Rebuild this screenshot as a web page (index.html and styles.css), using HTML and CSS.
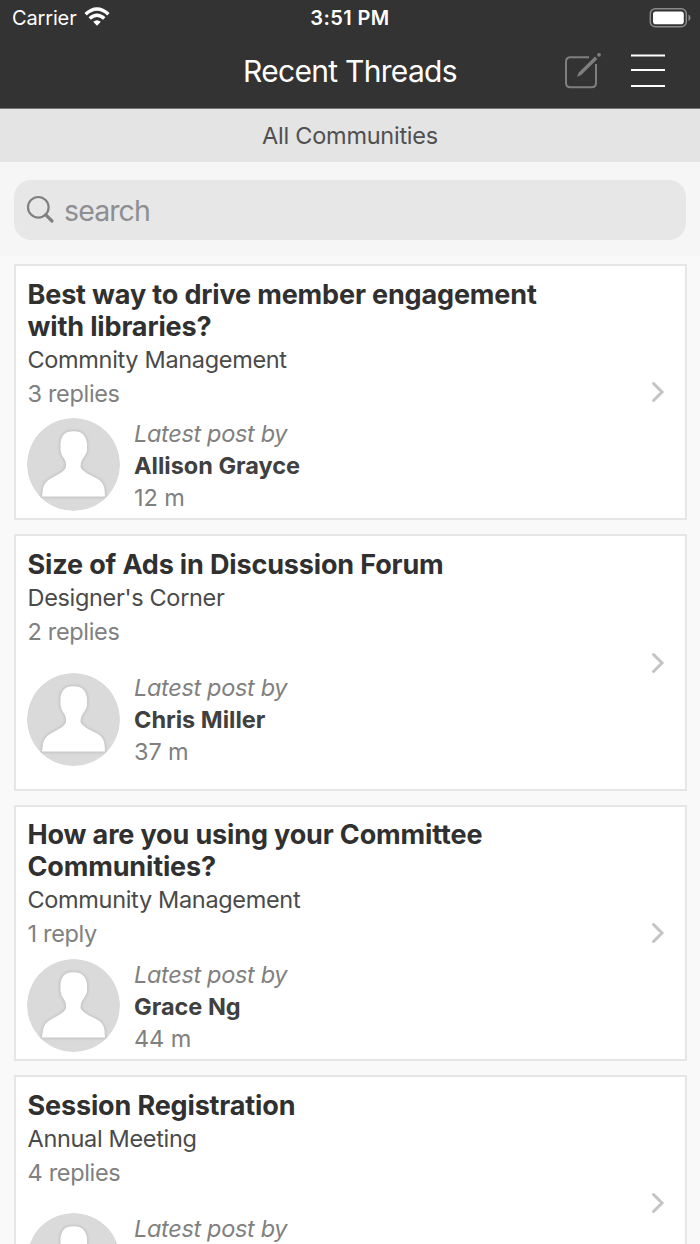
FILE: index.html
```html
<!DOCTYPE html>
<html lang="en">
<head>
<meta charset="utf-8">
<title>Recent Threads</title>
<link rel="stylesheet" href="styles.css">
</head>
<body>
<svg class="defs" aria-hidden="true">
  <defs>
    <filter id="soft" x="-10%" y="-10%" width="120%" height="120%"><feGaussianBlur stdDeviation="0.9"/></filter>
    <clipPath id="round"><circle cx="46.5" cy="46.5" r="46.5"/></clipPath>
    <path id="person" d="M40.500 14Q46.500 12.500 52.500 14Q59 17 60 25L60 33Q59 36 57 39Q53.500 43 53.500 49Q54.500 52 61 56L70 60.500Q76 63.500 77.500 71L78 78.500H15L16 71Q17 64.500 23 61L32 56Q38 52.500 39 49Q39.500 43 36 39Q34 36 33.500 32L33.500 25Q34 17 40.500 14Z"/>
    <symbol id="avatar" viewBox="0 0 93 93">
      <g clip-path="url(#round)">
        <circle cx="46.5" cy="46.5" r="46.5" fill="#dadada"/>
        <use href="#person" filter="url(#soft)" fill="none" stroke="#c6c6c6" stroke-width="3"/>
        <use href="#person" fill="#fff"/>
      </g>
    </symbol>
    <symbol id="chevron" viewBox="0 0 14 22"><path d="M2.500 2.500 11 11 2.500 19.500" fill="none" stroke="#c3c4c6" stroke-width="3" stroke-linecap="round" stroke-linejoin="miter"/></symbol>
  </defs>
</svg>
<header class="top">
  <div class="status">
    <div class="carrier"><span class="carrier-name">Carrier</span>
      <svg class="wifi" viewBox="0 0 26 20" fill="none" stroke="#fff" stroke-width="3.500">
        <path d="M1.600 7.200Q13-3.200 24.400 7.200"/><path d="M5.700 11.500Q13 5 20.300 11.500"/><path fill="#fff" stroke="none" d="M9.200 14.800Q13 11.600 16.800 14.800L13 18.800Z"/>
      </svg>
    </div>
    <span class="clock">3:51 PM</span>
    <svg class="battery" viewBox="0 0 42 20"><rect x="1.300" y=".8" width="36" height="18" rx="5" fill="none" stroke="#8b8b8b" stroke-width="1.500"/><rect x="4" y="3.400" width="30.800" height="12.800" rx="2.800" fill="#fff"/><path d="M39.500 6.500Q41.500 7.500 41.500 9.800T39.500 13Z" fill="#8b8b8b"/></svg>
  </div>
  <div class="nav">
    <h1 class="nav-title">Recent Threads</h1>
    <svg class="compose" viewBox="0 0 38 38" fill="none" stroke="#7f7f7f" stroke-width="2"><path d="M25 6.200H6.500Q2 6.200 2 10.700V31.800Q2 36.300 6.500 36.300H27.500Q32 36.300 32 31.800V13"/><path stroke="none" fill="#7f7f7f" d="M31 5.600 33.400 8 17.500 23.800 13 26 14.800 21.500Z"/><circle cx="35" cy="3.800" r="1.900" stroke="none" fill="#7f7f7f"/></svg>
    <svg class="menu" viewBox="0 0 36 36"><path d="M1 2.500H35M1 17H35M1 33H35" stroke="#fff" stroke-width="2"/></svg>
  </div>
</header>
<div class="scope"><span class="scope-name">All Communities</span></div>
<div class="search-area">
  <div class="search">
    <svg class="glass" viewBox="0 0 30 30" fill="none" stroke="#808083"><circle cx="12.300" cy="12.300" r="10.300" stroke-width="2.200"/><path d="M19.800 19.800 26 26" stroke-width="3.200" stroke-linecap="round"/></svg>
    <span class="placeholder">search</span>
  </div>
</div>
<main class="list">
  <article class="card">
    <div class="body">
      <h2 class="title">Best way to drive member engagement<br>with libraries?</h2>
      <p class="community">Commnity Management</p>
      <p class="replies">3 replies</p>
      <div class="latest"><svg class="avatar"><use href="#avatar"/></svg><div class="post"><em class="by">Latest post by</em><strong class="author">Allison Grayce</strong><span class="age">12 m</span></div></div>
    </div>
    <svg class="chevron"><use href="#chevron"/></svg>
  </article>
  <article class="card">
    <div class="body">
      <h2 class="title">Size of Ads in Discussion Forum</h2>
      <p class="community">Designer's Corner</p>
      <p class="replies">2 replies</p>
      <div class="latest"><svg class="avatar"><use href="#avatar"/></svg><div class="post"><em class="by">Latest post by</em><strong class="author">Chris Miller</strong><span class="age">37 m</span></div></div>
    </div>
    <svg class="chevron"><use href="#chevron"/></svg>
  </article>
  <article class="card">
    <div class="body">
      <h2 class="title">How are you using your Committee<br>Communities?</h2>
      <p class="community">Community Management</p>
      <p class="replies">1 reply</p>
      <div class="latest"><svg class="avatar"><use href="#avatar"/></svg><div class="post"><em class="by">Latest post by</em><strong class="author">Grace Ng</strong><span class="age">44 m</span></div></div>
    </div>
    <svg class="chevron"><use href="#chevron"/></svg>
  </article>
  <article class="card card-cut">
    <div class="body">
      <h2 class="title">Session Registration</h2>
      <p class="community">Annual Meeting</p>
      <p class="replies">4 replies</p>
      <div class="latest"><svg class="avatar"><use href="#avatar"/></svg><div class="post"><em class="by">Latest post by</em></div></div>
    </div>
    <svg class="chevron"><use href="#chevron"/></svg>
  </article>
</main>
</body>
</html>
```

FILE: styles.css
```css
* { box-sizing: border-box; margin: 0; padding: 0; }
html { overflow: hidden; }
body { width: 700px; height: 1244px; overflow: hidden; background: #f9f9f9; font-family: Inter, "Liberation Sans", sans-serif; color: #444; white-space: nowrap; display: flex; flex-direction: column; }
.defs { display: block; width: 0; height: 0; }
svg { display: block; flex: none; }

.top { flex: none; height: 109px; background: #333; border-bottom: 1px solid #777; }
.status { height: 36px; padding: 0 9px 0 12px; display: grid; grid-template-columns: 1fr auto 1fr; align-items: center; color: #fff; }
.carrier { display: flex; gap: 7px; align-items: center; font-size: 20px; letter-spacing: -.15px; }
.wifi { width: 26px; height: 20px; margin-top: -2px; }
.clock { font-size: 20px; font-weight: 600; letter-spacing: .4px; margin-right: 3px; }
.battery { width: 42px; height: 20px; justify-self: end; margin-top: -1px; }
.nav { height: 70px; padding-right: 34px; display: grid; grid-template-columns: 243px 1fr 38px 36px; align-items: center; }
.nav-title { grid-column: 2; color: #fff; font-size: 30px; font-weight: 400; line-height: 36px; letter-spacing: -.7px; margin-top: -1px; }
.compose { width: 38px; height: 38px; margin: -2px 0 0 -28px; }
.menu { width: 36px; height: 36px; }

.scope { flex: none; height: 53px; display: flex; align-items: center; justify-content: center; background: #e4e4e4; font-size: 23.500px; letter-spacing: -.25px; color: #505050; }
.search-area { flex: none; height: 94px; padding: 18px 14px 17px; background: #f6f6f6; }
.search { height: 60px; border-radius: 17px; background: #e7e7e7; display: flex; align-items: center; gap: 8px; padding-left: 12px; }
.glass { width: 30px; height: 30px; }
.placeholder { font-size: 28.500px; letter-spacing: -.9px; color: #8e8e93; }

.list { flex: 1; min-height: 0; overflow: hidden; padding: 8px 13px 0 14px; display: flex; flex-direction: column; gap: 14px; }
.card { flex: none; height: 256.400px; padding: 12.500px 20px 0 12px; display: flex; align-items: center; background: #fff; border: 2px solid #e6e6e6; }
.card-cut { height: auto; flex: 1; min-height: 0; overflow: hidden; align-items: flex-start; border-bottom: 0; }
.body { flex: 1; height: 100%; display: flex; flex-direction: column; }
.card-cut .body { height: auto; }
.title { margin-left: -.5px; font-size: 27px; font-weight: 700; line-height: 32px; letter-spacing: -.15px; color: #303030; }
.community, .replies { margin-left: -.5px; font-size: 23.500px; line-height: 34px; letter-spacing: -.33px; }
.community { color: #4a4a4a; }
.replies { color: #808080; }
.latest { flex: 1; display: flex; align-items: center; gap: 14px; margin: 1px 0 0 -1px; }
.card-cut .latest { flex: none; height: 138px; }
.avatar { width: 93px; height: 93px; }
.post { height: 96px; display: flex; flex-direction: column; line-height: 32px; font-size: 23.500px; letter-spacing: -.33px; padding-top: 1px; }
.by { color: #808080; }
.author { color: #404040; letter-spacing: 0; }
.age { color: #808080; letter-spacing: -.1px; }
.chevron { width: 14px; height: 22px; margin-top: -12px; }
.card-cut .chevron { margin-top: 102px; }
```
